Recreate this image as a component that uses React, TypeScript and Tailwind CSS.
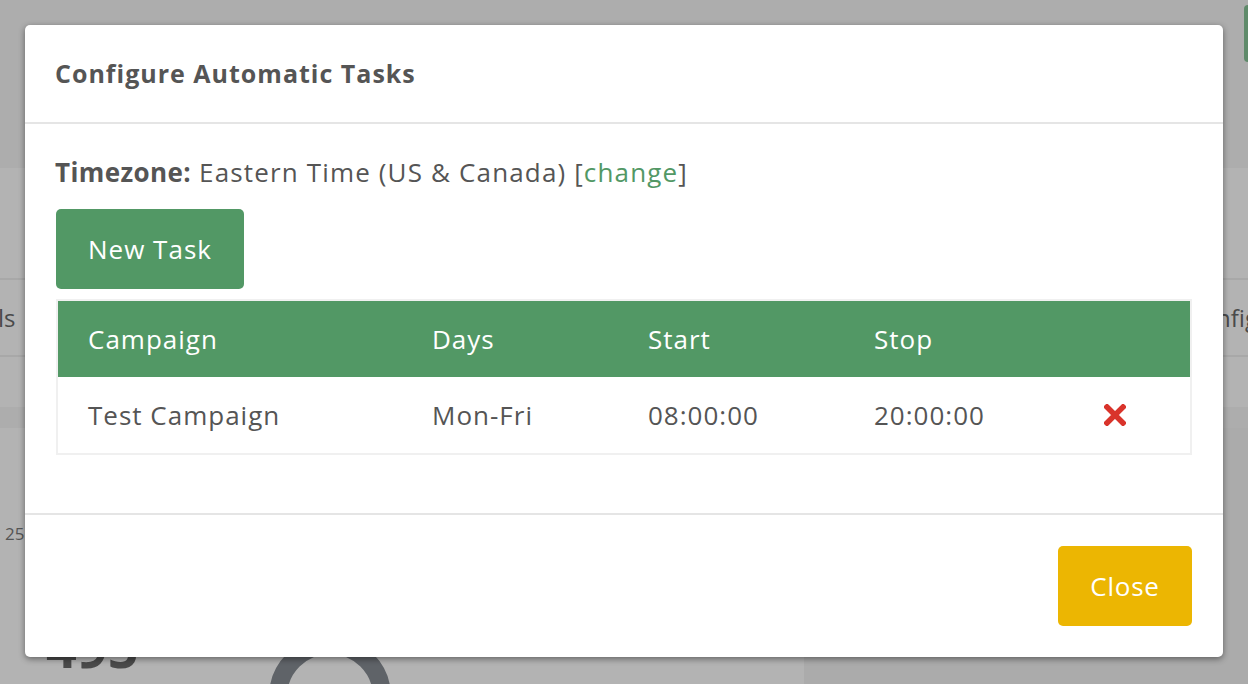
import React from "react";

const font = { fontFamily: '"Open Sans", "Noto Sans", Arial, sans-serif' };

export default function App() {
  return (
    <div className="relative w-[1248px] h-[684px] overflow-hidden bg-[#b3b3b3]" style={font}>
      {/* dimmed background page */}
      <div className="flex flex-col w-full h-full">
        <div className="relative shrink-0 h-[168px] bg-[#adadad]">
          <div className="absolute right-[-10px] top-[5px] w-[14px] h-[57px] rounded-[4px] bg-[#5f8a6a]" />
        </div>
        <div className="shrink-0 h-[110px]" />
        <div className="shrink-0 flex items-center justify-between h-[79px] border-y-2 border-[#a8a8a8] text-[24px] text-[#4a4a4a]">
          <span className="-ml-[2px]">ls</span>
          <span className="-mr-[10px]">nfig</span>
        </div>
        <div className="shrink-0 h-[50px]" />
        <div className="shrink-0 h-[21px] bg-[#adadad]" />
        <div className="flex flex-1 min-h-0">
          <div className="flex flex-col w-[804px]">
            <div className="pl-[5px] pt-[96px] text-[17px] leading-[20px] text-[#555]">25</div>
            <div className="flex items-start mt-[76px] pl-[46px]">
              <span className="text-[54px] leading-none font-bold text-[#4a4a4a]">495</span>
              <div className="ml-[130px] mt-[16px] w-[122px] h-[122px] shrink-0 rounded-full border-[18px] border-[#5f6368]" />
            </div>
          </div>
          <div className="flex-1 bg-[#ababab]" />
        </div>
      </div>

      {/* modal */}
      <div className="absolute left-[25px] top-[25px] w-[1198px] h-[632px] bg-white rounded-[5px] shadow-[0_2px_6px_rgba(0,0,0,0.45)] flex flex-col text-[#555]">
        <div className="h-[99px] shrink-0 flex items-center px-[30px] border-b-2 border-[#e5e5e5]">
          <h2 className="text-[25px] font-bold text-[#555] tracking-[1px]">Configure Automatic Tasks</h2>
        </div>
        <div className="shrink-0 flex flex-col px-[31px] pt-[32px] pb-[58px] border-b-2 border-[#e5e5e5] tracking-[1.15px]">
          <div className="text-[26px] leading-[32px] -ml-[1px]">
            <span className="font-bold tracking-[0.4px]">Timezone:</span> Eastern Time (US &amp; Canada) [<span className="text-[#529865]">change</span>]
          </div>
          <button className="mt-[21px] w-[188px] h-[80px] rounded-[5px] bg-[#529865] text-white text-[26px] tracking-[1px] flex items-center justify-center">
            New Task
          </button>
          <div className="mt-[10px] border-2 border-[#f0f0f0] tracking-[1px]">
            <div className="flex items-center h-[76px] bg-[#529865] text-white text-[26px]">
              <div className="w-[374px] pl-[30px]">Campaign</div>
              <div className="w-[216px]">Days</div>
              <div className="w-[226px]">Start</div>
              <div className="w-[230px]">Stop</div>
              <div className="flex-1" />
            </div>
            <div className="flex items-center h-[76px] text-[26px] text-[#555]">
              <div className="w-[374px] pl-[30px]">Test Campaign</div>
              <div className="w-[216px]">Mon-Fri</div>
              <div className="w-[226px]">08:00:00</div>
              <div className="w-[230px]">20:00:00</div>
              <div className="flex-1">
                <svg width="22" height="22" viewBox="0 0 22 22">
                  <path d="M3 3 L19 19 M19 3 L3 19" stroke="#d9342b" strokeWidth="5.5" strokeLinecap="square" />
                </svg>
              </div>
            </div>
          </div>
        </div>
        <div className="flex-1 flex items-center justify-end pr-[31px]">
          <button className="w-[134px] h-[80px] rounded-[5px] bg-[#ecb602] text-white text-[26px] tracking-[0.8px]">Close</button>
        </div>
      </div>
    </div>
  );
}
